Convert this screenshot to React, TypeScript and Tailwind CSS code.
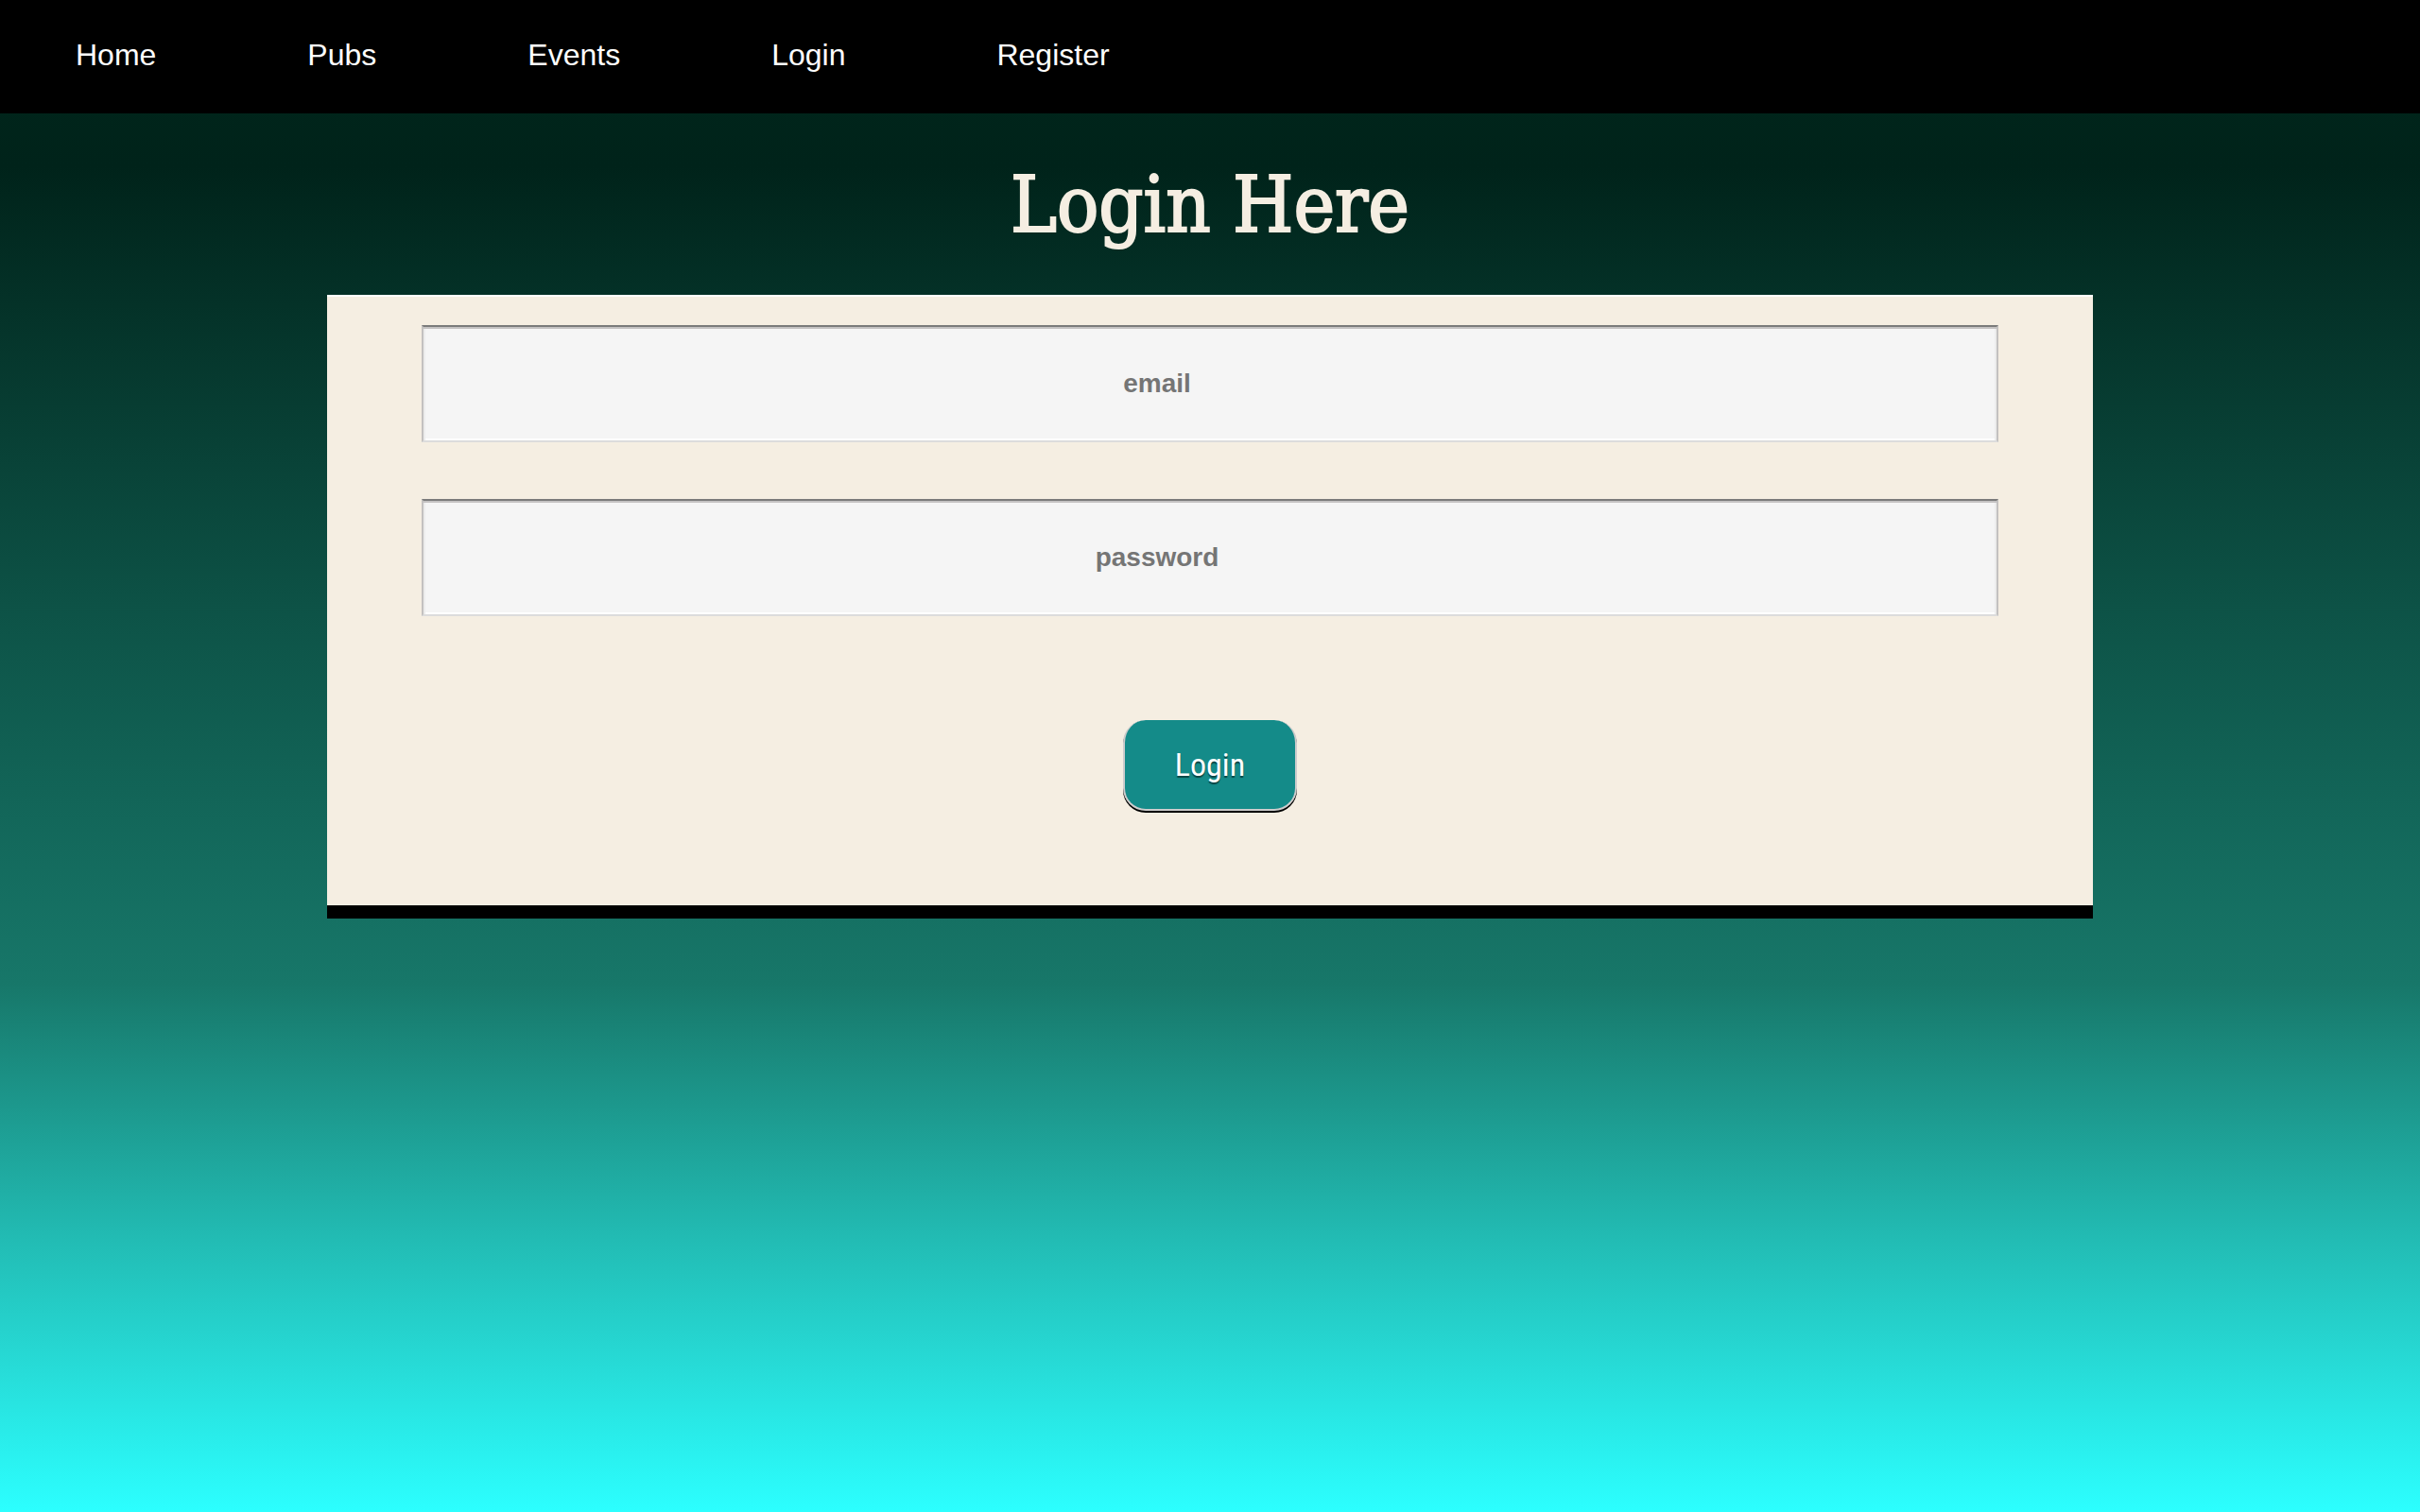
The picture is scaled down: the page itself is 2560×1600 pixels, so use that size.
const links = ["Home", "Pubs", "Events", "Login", "Register"];

type FieldProps = { id: string; type: string; label: string };

function Field({ id, type, label }: FieldProps) {
  return (
    <input
      id={id}
      name={id}
      type={type}
      aria-label={label}
      placeholder={label}
      className="block h-[124px] w-full border-2 border-t-[#7b7b7b] border-r-[#c3c1c0] border-b-[#dcdcdc] border-l-[#c3c1c0] bg-[#f5f5f5] pr-[112px] text-center text-[28px] font-bold text-[#333333] shadow-[inset_0_2px_0_#c4c2c2,inset_2px_0_0_#ececec,inset_-2px_0_0_#ececec,inset_0_-2px_0_#ffffff] outline-none placeholder:text-[#757575]"
    />
  );
}

export default function App() {
  return (
    <div className="min-h-screen bg-[linear-gradient(180deg,#00281c_0%,#00231a_11%,#0d5246_40%,#177769_65%,#22bcb4_82%,#2cffff_100%)] font-['Liberation_Sans',Arial,sans-serif]">
      <nav className="bg-black">
        <ul className="flex h-[120px] items-center pb-1">
          {links.map((label) => (
            <li key={label}>
              <a href={"#" + label.toLowerCase()} className="block px-20 text-[32px] leading-10 text-white">
                {label}
              </a>
            </li>
          ))}
        </ul>
      </nav>
      <main className="mx-auto w-[73%]">
        <h1 className="flex h-[192px] items-center justify-center font-['DejaVu_Serif_Condensed','DejaVu_Serif',serif] text-[82px] text-[#f5eee2] [-webkit-text-stroke:2px_#f5eee2]">
          Login Here
        </h1>
        <form
          className="flex flex-col gap-[60px] border-t-2 border-b-[14px] border-t-white border-b-black bg-[#f5eee2] px-[100px] pt-[30px] pb-[100px]"
          onSubmit={(event) => event.preventDefault()}
        >
          <Field id="email" type="email" label="email" />
          <Field id="password" type="password" label="password" />
          <button
            type="submit"
            className="mx-auto mt-[50px] h-[96px] w-[184px] rounded-3xl border-x-2 border-b-2 border-[#cccccc] border-t-[#148b89] bg-[#148b89] font-['Roboto_Condensed',Roboto,sans-serif] text-[34px] text-white shadow-[0_2px_0_#000000] text-shadow-[0_2px_1px_#0a4544]"
          >
            Login
          </button>
        </form>
      </main>
    </div>
  );
}
